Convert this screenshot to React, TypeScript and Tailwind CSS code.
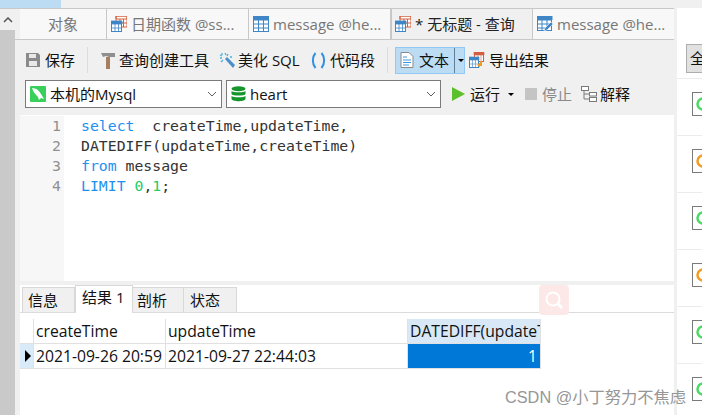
import type { ReactNode } from 'react';

const uiFont = { fontFamily: '"Open Sans", "Noto Sans CJK SC", sans-serif' };

function TableIcon({ accent = false }: { accent?: boolean }) {
  return (
    <svg width="16" height="16" viewBox="0 0 16 16" className="shrink-0">
      {accent && <rect x="5" y="0" width="11" height="11" fill="#fff" stroke="#d2603f" />}
      {accent && <path d="M5 0h11v3H5zM9 3v8M12.500 3v8M5 7h11" fill="none" stroke="#d2603f" />}
      <rect x={0.5} y={accent ? 5.5 : 0.5} width={accent ? 10 : 15} height={accent ? 10 : 15} fill="#fff" stroke="#3f86c6" />
      {accent ? (
        <path d="M0 5h11v3H0zM4 8v8M7.500 8v8M0 12h11" fill="#3f86c6" stroke="#3f86c6" strokeWidth="0.8" />
      ) : (
        <path d="M0 0h16v4H0zM5.500 4v12M10.500 4v12M0 8h16M0 12h16" fill="#3f86c6" stroke="#3f86c6" />
      )}
    </svg>
  );
}

function EditTableIcon() {
  return (
    <svg width="16" height="16" viewBox="0 0 16 16" className="shrink-0">
      <rect x="0.500" y="0.500" width="14" height="14" fill="#fff" stroke="#3f86c6" />
      <path d="M0 0h15v4H0zM5 4v11M10 4v6M0 8h15M0 12h8" fill="#3f86c6" stroke="#3f86c6" />
      <path d="M7 15l1-3 6-6 2 2-6 6z" fill="#3f86c6" stroke="#fff" strokeWidth="0.5" />
    </svg>
  );
}

function SaveIcon() {
  return (
    <svg width="16" height="16" viewBox="0 0 16 16" className="shrink-0">
      <path d="M1 1h12l2 2v12H1z" fill="#8a8a8a" />
      <rect x="4" y="2" width="7" height="4" fill="#e8e8e8" />
      <rect x="4" y="9" width="8" height="5" fill="#e8e8e8" />
    </svg>
  );
}

function HammerIcon() {
  return (
    <svg width="16" height="17" viewBox="0 0 16 17" className="shrink-0">
      <path d="M1 1h14v4H9L6 4 3 5z" fill="#8f8f8f" />
      <rect x="6" y="5" width="4" height="12" fill="#a87f5e" />
    </svg>
  );
}

function WandIcon() {
  return (
    <svg width="16" height="16" viewBox="0 0 16 16" className="shrink-0">
      <path d="M6 7l2-2 8 8-2 3z" fill="#4a8fc9" />
      <path d="M3 1v2M1 6h2M6 1l1 2M1 3l2 1M9 2l-1 2M2 10l2-2M11 5h2" stroke="#48b2dc" strokeWidth="1.300" />
    </svg>
  );
}

function BracesIcon() {
  return (
    <svg width="15" height="17" viewBox="0 0 15 17" className="shrink-0">
      <path d="M4.500 1C1 5 1 12 4.500 16M10.500 1C14 5 14 12 10.500 16" fill="none" stroke="#2f8fe0" strokeWidth="2" />
    </svg>
  );
}

function DocIcon() {
  return (
    <svg width="14" height="16" viewBox="0 0 14 16" className="shrink-0">
      <path d="M1 .5h8l4 4v11H1z" fill="#fff" stroke="#8a8a8a" />
      <path d="M3 5h4M3 8h8M3 10.500h8M3 13h6" stroke="#3f96dc" />
    </svg>
  );
}

function ExportIcon() {
  return (
    <svg width="16" height="16" viewBox="0 0 16 16" className="shrink-0">
      <rect x="5.500" y="0.500" width="9" height="9" fill="#fff" stroke="#d2603f" />
      <path d="M5 0h10v3H5zM9 3v6M12 3v6" fill="#d2603f" stroke="#d2603f" strokeWidth="0.6" />
      <rect x="0.500" y="5.500" width="9" height="10" fill="#fff" stroke="#3f86c6" />
      <path d="M0 5h10v3H0zM3.500 8v8M6.500 8v8M0 12h10" fill="#3f86c6" stroke="#3f86c6" strokeWidth="0.6" />
      <path d="M12 9v4H9.500" fill="none" stroke="#f09a20" strokeWidth="2" />
      <path d="M11 10.500v5l-3-2.500z" fill="#f09a20" />
    </svg>
  );
}

function DolphinIcon() {
  return (
    <svg width="16" height="16" viewBox="0 0 16 16" className="shrink-0">
      <rect width="16" height="16" rx="1" fill="#38d05a" />
      <path d="M2 2c4 0 7 2 9 6l3 5-3-1-2 2-1-3C6 9 3 6 2 2z" fill="#fff" />
    </svg>
  );
}

function DbIcon() {
  return (
    <svg width="15" height="16" viewBox="0 0 15 16" className="shrink-0">
      <ellipse cx="7.500" cy="2.800" rx="7" ry="2.500" fill="#14962c" />
      <path d="M.5 5c1 1.800 13 1.800 14 0v3c-1 2-13 2-14 0zM.5 10c1 1.800 13 1.800 14 0v3c-1 3-13 3-14 0z" fill="#14962c" />
    </svg>
  );
}

function ExplainIcon() {
  return (
    <svg width="16" height="16" viewBox="0 0 16 16" className="shrink-0" fill="#fff" stroke="#7a7a7a">
      <rect x="0.500" y="0.500" width="7" height="4" />
      <rect x="8.500" y="6.500" width="7" height="3.500" />
      <rect x="8.500" y="11.500" width="7" height="4" />
      <path d="M3 5v8h5M3 8h5" fill="none" />
    </svg>
  );
}

function Chevron() {
  return (
    <svg width="10" height="6" viewBox="0 0 10 6" className="shrink-0">
      <path d="M1 1l4 4 4-4" fill="none" stroke="#606060" />
    </svg>
  );
}

function Caret({ className = '' }: { className?: string }) {
  return <span className={`h-0 w-0 border-x-[3px] border-t-[3px] border-x-transparent border-t-black ${className}`} />;
}

function Tab({ children, active = false, icon }: { children: ReactNode; active?: boolean; icon?: ReactNode }) {
  return (
    <div
      className={`flex h-full w-[142px] items-center gap-[4px] ${
        active
          ? 'z-10 -mb-px border-x border-[#c8c8c8] bg-[#f0f0f0] pl-[3px] text-[#222]'
          : 'border-r border-[#c8c8c8] bg-[#f8f8f8] pl-[4px] text-[#777]'
      }`}
    >
      {icon}
      <span className="whitespace-nowrap">{children}</span>
    </div>
  );
}

function ToolItem({ icon, children, className = '' }: { icon: ReactNode; children: ReactNode; className?: string }) {
  return (
    <div className={`flex items-center gap-[3px] whitespace-nowrap ${className}`}>
      {icon}
      <span>{children}</span>
    </div>
  );
}

function Combo({ icon, label, className }: { icon: ReactNode; label: string; className: string }) {
  return (
    <div className={`flex h-[28px] items-center border border-[#7a7a7a] bg-white pl-[4px] pr-[4px] ${className}`}>
      {icon}
      <span className="ml-[4px] flex-1">{label}</span>
      <Chevron />
    </div>
  );
}

function ResultTab({ children, active = false, className }: { children: ReactNode; active?: boolean; className: string }) {
  return (
    <div
      className={`flex items-center border-[#d8d8d8] ${className} ${
        active ? 'z-10 -mb-px h-[28px] border-x border-t bg-white pb-[4px]' : 'h-[25px] border-r border-t bg-[#f0f0f0]'
      }`}
    >
      {children}
    </div>
  );
}

function SideCard({ color }: { color: string }) {
  return (
    <div className="h-[57px] border-b border-[#ececec] pl-[15px] pt-[13px]">
      <div className="flex h-[24px] w-[40px] items-center border border-[#7a7a7a] bg-white pl-[3px]">
        <svg width="14" height="14" viewBox="0 0 14 14" className="shrink-0">
          <circle cx="7" cy="7" r="5.500" fill="none" stroke={color} strokeWidth="2.500" />
        </svg>
      </div>
    </div>
  );
}

export default function App() {
  return (
    <div className="relative h-[415px] w-[702px] overflow-hidden bg-[#f0f0f0] text-[15px] text-[#111]" style={uiFont}>
      <div className="h-[8px] w-[674px]">
        <div className="h-full w-[61px] bg-[#bcdcf4]" />
      </div>

      <div className="flex h-[407px]">
        {/* left scroll strip */}
        <div className="flex w-[15px] shrink-0 flex-col">
          <div className="flex h-[22px] items-center justify-center border-t border-[#c8c8c8]">
            <svg width="10" height="6" viewBox="0 0 10 6">
              <path d="M1 5l4-4 4 4" fill="none" stroke="#555" strokeWidth="1.500" />
            </svg>
          </div>
          <div className="flex-1 bg-[#c9c9c9]" />
        </div>

        <div className="flex w-[659px] shrink-0 flex-col border-t border-[#c8c8c8] pl-[5px]">
          {/* query tabs */}
          <div className="-ml-[5px] flex h-[31px] border-b border-[#c8c8c8] pl-[5px]">
            <div className="flex h-full w-[87px] items-center justify-center border-r border-[#c8c8c8] bg-[#f8f8f8] text-[#777]">
              对象
            </div>
            <Tab icon={<TableIcon accent />}>日期函数 @ss...</Tab>
            <Tab icon={<TableIcon />}>message @he...</Tab>
            <Tab active icon={<TableIcon accent />}>* 无标题 - 查询</Tab>
            <div className="flex h-full w-[141px] items-center gap-[4px] bg-[#f8f8f8] pl-[4px] text-[#777]">
              <EditTableIcon />
              <span className="whitespace-nowrap">message @he...</span>
            </div>
          </div>

          {/* toolbar */}
          <div className="flex h-[40px] items-center pl-[5px]">
            <ToolItem icon={<SaveIcon />} className="w-[50px] gap-[4px]">保存</ToolItem>
            <div className="ml-[12px] h-[26px] w-px bg-[#dcdcdc]" />
            <ToolItem icon={<HammerIcon />} className="ml-[12px] w-[119px]">查询创建工具</ToolItem>
            <ToolItem icon={<WandIcon />} className="w-[92px]">美化 SQL</ToolItem>
            <ToolItem icon={<BracesIcon />} className="w-[64px] gap-[4px]">代码段</ToolItem>
            <div className="ml-[12px] h-[26px] w-px bg-[#dcdcdc]" />
            <div className="ml-[7px] flex h-[27px] w-[70px] items-center border border-[#90c8f6] bg-[#bcdcf4] pl-[4px]">
              <DocIcon />
              <span className="ml-[5px] w-[38px]">文本</span>
              <div className="h-full w-px bg-[#5f7f96]" />
              <Caret className="ml-[3px]" />
            </div>
            <ToolItem icon={<ExportIcon />} className="ml-[4px] gap-[4px]">导出结果</ToolItem>
          </div>

          {/* connection row */}
          <div className="flex h-[28px] items-center pl-[5px]">
            <Combo icon={<DolphinIcon />} label="本机的Mysql" className="w-[197px]" />
            <Combo icon={<DbIcon />} label="heart" className="ml-[4px] w-[215px]" />
            <svg width="13" height="14" viewBox="0 0 13 14" className="ml-[11px] shrink-0">
              <path d="M0 0l13 7-13 7z" fill="#5cc02c" />
            </svg>
            <span className="ml-[5px]">运行</span>
            <Caret className="ml-[8px]" />
            <span className="ml-[11px] h-[12px] w-[12px] bg-[#c4c4c4]" />
            <span className="ml-[5px] text-[#8a8a8a]">停止</span>
            <div className="ml-[9px]">
              <ExplainIcon />
            </div>
            <span className="ml-[3px]">解释</span>
          </div>

          {/* sql editor */}
          <div className="mt-[7px] flex h-[166px] bg-white pt-[1px] text-[14.8px] leading-[20px]" style={{ fontFamily: '"DejaVu Sans Mono", monospace' }}>
            <div className="w-[44px] bg-[#f7f7f7] pr-[3px] text-right text-[#909090]">
              <div>1</div>
              <div>2</div>
              <div>3</div>
              <div>4</div>
            </div>
            <div className="whitespace-pre pl-[17px] text-[#333]">
              <div>
                <span className="text-[#1e90f0]">select</span>  createTime,updateTime,
              </div>
              <div>DATEDIFF(updateTime,createTime)</div>
              <div>
                <span className="text-[#1e90f0]">from</span> message
              </div>
              <div>
                <span className="text-[#1e90f0]">LIMIT</span> <span className="text-[#22cc66]">0</span>,<span className="text-[#22cc66]">1</span>;
              </div>
            </div>
          </div>

          {/* results */}
          <div className="mt-[4px] flex-1 bg-white">
            <div className="flex h-[28px] items-end border-b border-[#dcdcdc] pl-[2px]">
              <ResultTab className="w-[53px] border-l pl-[5px]">信息</ResultTab>
              <ResultTab active className="w-[58px] pl-[6px]">结果 1</ResultTab>
              <ResultTab className="w-[51px] pl-[4px]">剖析</ResultTab>
              <ResultTab className="w-[53px] pl-[6px]">状态</ResultTab>
            </div>

            <div className="mt-[6px] grid w-[521px] grid-cols-[14px_132px_242px_133px] grid-rows-[25px_25px] text-[15.7px] leading-none">
              <div className="border-b border-r border-[#e0e0e0]" />
              <div className="flex items-center border-b border-r border-[#e0e0e0] pl-[2px] pt-[2px]">createTime</div>
              <div className="flex items-center border-b border-r border-[#e0e0e0] pl-[2px] pt-[2px]">updateTime</div>
              <div className="flex items-center overflow-hidden whitespace-nowrap border-b border-r border-[#e0e0e0] bg-[#d8e8f6] pl-[2px] pt-[2px]">
                DATEDIFF(updateTime,createTime)
              </div>
              <div className="flex items-center border-b border-r border-[#e0e0e0] bg-[#d9eaf8] pl-[5px]">
                <span className="h-0 w-0 border-y-[6px] border-l-[6px] border-y-transparent border-l-black" />
              </div>
              <div className="flex items-center overflow-hidden whitespace-nowrap border-b border-r border-[#e0e0e0] pl-[2px] pt-[2px]">2021-09-26 20:59</div>
              <div className="flex items-center border-b border-r border-[#e0e0e0] pl-[2px] pt-[2px]">2021-09-27 22:44:03</div>
              <div className="flex items-center justify-end border-b border-r border-[#e0e0e0] bg-[#0078d7] pr-[3px] pt-[2px] text-white">1</div>
            </div>
          </div>
        </div>

        {/* right panel */}
        <div className="ml-[3px] flex-1 overflow-hidden bg-white">
          <div className="h-[71px] border-b border-[#ececec] pl-[9px] pt-[36px]">
            <div className="flex h-[29px] w-[40px] items-center border border-[#adadad] bg-[#e1e1e1] pl-[3px]">全</div>
          </div>
          <SideCard color="#4cd964" />
          <SideCard color="#f59a23" />
          <SideCard color="#4cd964" />
          <SideCard color="#f59a23" />
          <SideCard color="#4cd964" />
          <SideCard color="#4cd964" />
        </div>
      </div>

      {/* floating search badge */}
      <div className="absolute left-[539px] top-[285px] flex h-[30px] w-[30px] items-center justify-center rounded bg-[#fde8e8]">
        <svg width="20" height="20" viewBox="0 0 20 20" fill="none" stroke="#fff" strokeWidth="2">
          <circle cx="9" cy="9" r="6.500" />
          <path d="M14 14l4 4" strokeWidth="3" />
        </svg>
      </div>

      {/* watermark */}
      <div className="absolute left-[505px] top-[385px] whitespace-nowrap text-[16.300px] text-[#8c8c8c] opacity-90" style={{ fontFamily: '"Liberation Sans", "Noto Sans CJK SC", sans-serif' }}>
        CSDN @小丁努力不焦虑
      </div>
    </div>
  );
}
